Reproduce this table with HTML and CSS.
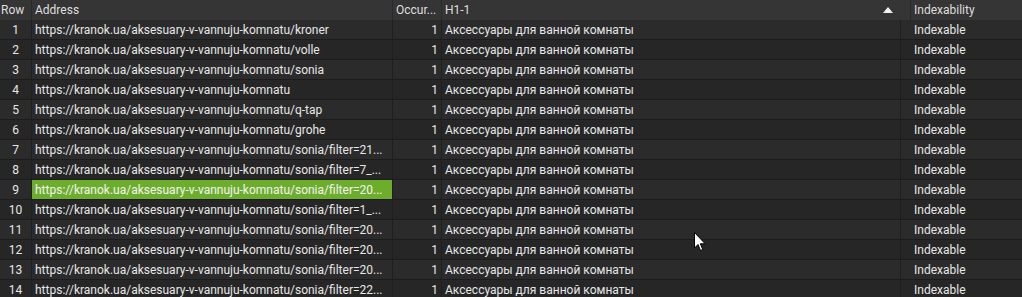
FILE: index.html
```html
<!DOCTYPE html>
<html>
<head>
<meta charset="utf-8">
<link rel="stylesheet" href="styles.css">
</head>
<body>
<div class="table">
  <div class="head">
    <div class="hc c-row">Row</div>
    <div class="hc c-addr">Address</div>
    <div class="hc c-occ">Occur...</div>
    <div class="hc c-h1"><span>H1-1</span><span class="arrow"></span></div>
    <div class="hc c-idx">Indexability</div>
  </div>
  <div class="body">
    <div class="row"><div class="c c-row">1</div><div class="c c-addr">https://kranok.ua/aksesuary-v-vannuju-komnatu/kroner</div><div class="c c-occ">1</div><div class="c c-h1">Аксессуары для ванной комнаты</div><div class="c c-idx">Indexable</div></div>
    <div class="row"><div class="c c-row">2</div><div class="c c-addr">https://kranok.ua/aksesuary-v-vannuju-komnatu/volle</div><div class="c c-occ">1</div><div class="c c-h1">Аксессуары для ванной комнаты</div><div class="c c-idx">Indexable</div></div>
    <div class="row"><div class="c c-row">3</div><div class="c c-addr">https://kranok.ua/aksesuary-v-vannuju-komnatu/sonia</div><div class="c c-occ">1</div><div class="c c-h1">Аксессуары для ванной комнаты</div><div class="c c-idx">Indexable</div></div>
    <div class="row"><div class="c c-row">4</div><div class="c c-addr">https://kranok.ua/aksesuary-v-vannuju-komnatu</div><div class="c c-occ">1</div><div class="c c-h1">Аксессуары для ванной комнаты</div><div class="c c-idx">Indexable</div></div>
    <div class="row"><div class="c c-row">5</div><div class="c c-addr">https://kranok.ua/aksesuary-v-vannuju-komnatu/q-tap</div><div class="c c-occ">1</div><div class="c c-h1">Аксессуары для ванной комнаты</div><div class="c c-idx">Indexable</div></div>
    <div class="row"><div class="c c-row">6</div><div class="c c-addr">https://kranok.ua/aksesuary-v-vannuju-komnatu/grohe</div><div class="c c-occ">1</div><div class="c c-h1">Аксессуары для ванной комнаты</div><div class="c c-idx">Indexable</div></div>
    <div class="row"><div class="c c-row">7</div><div class="c c-addr">https://kranok.ua/aksesuary-v-vannuju-komnatu/sonia/filter=21...</div><div class="c c-occ">1</div><div class="c c-h1">Аксессуары для ванной комнаты</div><div class="c c-idx">Indexable</div></div>
    <div class="row"><div class="c c-row">8</div><div class="c c-addr">https://kranok.ua/aksesuary-v-vannuju-komnatu/sonia/filter=7_...</div><div class="c c-occ">1</div><div class="c c-h1">Аксессуары для ванной комнаты</div><div class="c c-idx">Indexable</div></div>
    <div class="row"><div class="c c-row">9</div><div class="c c-addr sel">https://kranok.ua/aksesuary-v-vannuju-komnatu/sonia/filter=20...</div><div class="c c-occ">1</div><div class="c c-h1">Аксессуары для ванной комнаты</div><div class="c c-idx">Indexable</div></div>
    <div class="row"><div class="c c-row">10</div><div class="c c-addr">https://kranok.ua/aksesuary-v-vannuju-komnatu/sonia/filter=1_...</div><div class="c c-occ">1</div><div class="c c-h1">Аксессуары для ванной комнаты</div><div class="c c-idx">Indexable</div></div>
    <div class="row"><div class="c c-row">11</div><div class="c c-addr">https://kranok.ua/aksesuary-v-vannuju-komnatu/sonia/filter=20...</div><div class="c c-occ">1</div><div class="c c-h1">Аксессуары для ванной комнаты</div><div class="c c-idx">Indexable</div></div>
    <div class="row"><div class="c c-row">12</div><div class="c c-addr">https://kranok.ua/aksesuary-v-vannuju-komnatu/sonia/filter=20...</div><div class="c c-occ">1</div><div class="c c-h1">Аксессуары для ванной комнаты</div><div class="c c-idx">Indexable</div></div>
    <div class="row"><div class="c c-row">13</div><div class="c c-addr">https://kranok.ua/aksesuary-v-vannuju-komnatu/sonia/filter=20...</div><div class="c c-occ">1</div><div class="c c-h1">Аксессуары для ванной комнаты</div><div class="c c-idx">Indexable</div></div>
    <div class="row"><div class="c c-row">14</div><div class="c c-addr">https://kranok.ua/aksesuary-v-vannuju-komnatu/sonia/filter=22...</div><div class="c c-occ">1</div><div class="c c-h1">Аксессуары для ванной комнаты</div><div class="c c-idx">Indexable</div></div>
  </div>
  <svg class="cursor" width="13" height="20" viewBox="0 0 13 20"><path d="M0.5 0.5 L0.5 16 L4 12.5 L6.5 18.5 L8.8 17.5 L6.3 11.8 L11.2 11.8 Z" fill="#fff" stroke="#000" stroke-width="1" stroke-linejoin="miter"/></svg>
</div>
</body>
</html>
```
FILE: styles.css
```css
html, body {
  margin: 0;
  padding: 0;
  background: #262626;
  overflow: hidden;
}
.table {
  position: relative;
  width: 1022px;
  height: 297px;
  font-family: Roboto, "Liberation Sans", sans-serif;
  font-size: 12px;
  color: #e6e6e6;
}
.head {
  display: grid;
  grid-template-columns: 31px 361px 49px 469px 1fr;
  height: 20px;
  background: #353535;
}
.hc {
  display: flex;
  align-items: center;
  padding-left: 3px;
  border-left: 1px solid #2a2a2a;
  white-space: nowrap;
  overflow: hidden;
  color: #dedede;
}
.hc.c-row { border-left: none; padding-left: 1px; }
.c-h1.hc { justify-content: space-between; padding-right: 17px; }
.arrow {
  width: 0;
  height: 0;
  border-left: 5px solid transparent;
  border-right: 5px solid transparent;
  border-bottom: 6px solid #f2f2f2;
}
.row {
  display: grid;
  grid-template-columns: 31px 361px 49px 459px 1fr;
  height: 19px;
  border-bottom: 1px solid #1c1c1c;
  background: #2b2b2b;
}
.row:nth-child(even) { background: #262626; }
.c {
  display: flex;
  align-items: center;
  white-space: nowrap;
  overflow: hidden;
  border-left: 1px solid #1f1f1f;
  padding-left: 3px;
  padding-top: 1px;
}
.c.c-row { border-left: none; justify-content: center; padding-left: 0; }
.c.c-occ { justify-content: flex-end; padding-left: 0; padding-right: 3px; }
.c.c-idx { padding-left: 13px; }
.c.sel { background: #6cae2c; color: #f4f4f4; }
.cursor {
  position: absolute;
  left: 694px;
  top: 232px;
}
```
